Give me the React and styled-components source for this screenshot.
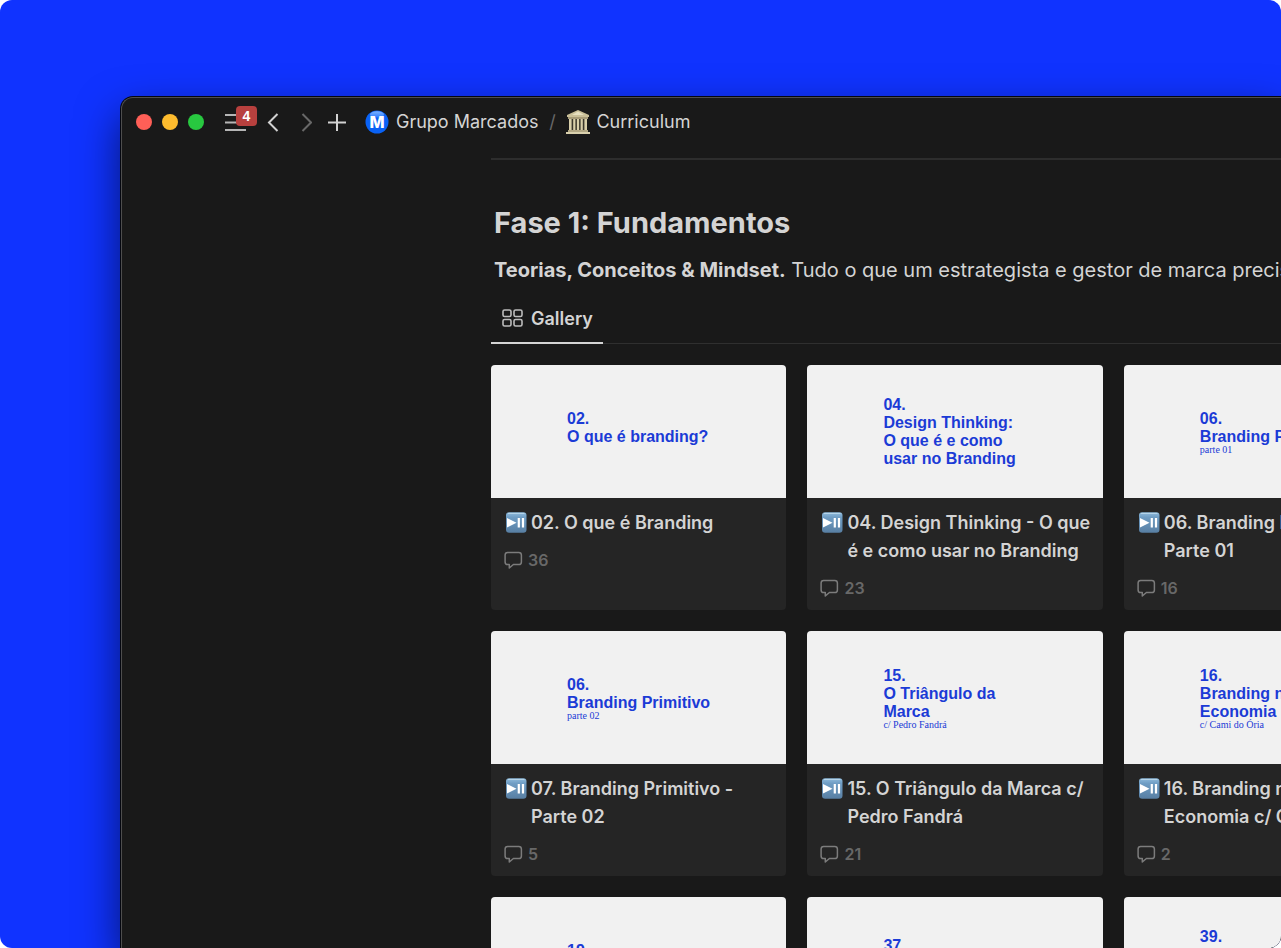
import React from 'react';
import styled, { createGlobalStyle } from 'styled-components';

const GlobalStyle = createGlobalStyle`
  *, *::before, *::after { box-sizing: border-box; }
  body {
    margin: 0;
    background: #fff;
    font-family: Inter, 'Liberation Sans', sans-serif;
    color: #d4d4d4;
  }
  h1, h2, h3, p { margin: 0; }
`;

const Backdrop = styled.div`
  display: flex;
  height: 100vh;
  padding: 97px 0 0 121px;
  border-radius: 12px;
  overflow: hidden;
  background: #1033ff;
`;

const Window = styled.main`
  flex: 1;
  min-width: 0;
  border: solid #4e4e4e;
  border-width: 1px 0 0 1px;
  border-top-left-radius: 12px;
  background: #191919;
  box-shadow: 0 0 0 1px #05070f, 0 18px 44px rgba(0, 0, 0, 0.6);
`;

const TitleBar = styled.header`
  display: flex;
  align-items: center;
  height: 48px;
  padding-left: 14px;
`;

const Lights = styled.div`
  display: flex;
  gap: 10px;
  margin-right: 21px;
`;

const Light = styled.span`
  width: 16px;
  height: 16px;
  border-radius: 50%;
  background: ${(p) => p.$color};
`;

const ToolButton = styled.button`
  position: relative;
  display: flex;
  padding: 0;
  border: 0;
  background: none;
  color: ${(p) => (p.$dim ? '#686868' : '#d2d2d2')};
`;

const Tools = styled.nav`
  display: flex;
  align-items: center;
  gap: 16px;
  margin-right: 19px;
`;

const Badge = styled.span`
  position: absolute;
  top: -5px;
  left: 11px;
  width: 21px;
  height: 20px;
  border-radius: 4px;
  background: #b8403e;
  color: #fff;
  font-size: 14px;
  font-weight: 700;
  line-height: 20px;
  text-align: center;
`;

const Crumbs = styled.nav`
  display: flex;
  align-items: center;
  font-size: 18px;
  line-height: 24px;
`;

const Crumb = styled.a`
  display: flex;
  align-items: center;
  gap: ${(p) => p.$gap};
  color: inherit;
  text-decoration: none;
`;

const Slash = styled.span`
  width: 28px;
  color: #686868;
  text-align: center;
`;

const Content = styled.section`
  margin-left: 369px;
  padding-top: 12px;
`;

const Rule = styled.hr`
  height: 2px;
  margin: 0 0 43px;
  border: 0;
  background: #2d2d2d;
`;

const Heading = styled.h1`
  padding-left: 3px;
  font-size: 29px;
  font-weight: 700;
  line-height: 40px;
`;

const Lead = styled.p`
  padding-left: 3px;
  margin-top: 12px;
  font-size: 20px;
  line-height: 30px;
  white-space: nowrap;
  overflow: hidden;

  strong { font-weight: 700; }
`;

const Tabs = styled.div`
  display: flex;
  margin-top: 10px;
  box-shadow: inset 0 -1px #2f2f2f;
`;

const Tab = styled.button`
  display: flex;
  align-items: flex-start;
  gap: 8px;
  height: 49px;
  padding: 12px 10px 0 11px;
  border: 0;
  border-bottom: 2px solid #d4d4d4;
  background: none;
  color: inherit;
  font: 600 18px/24px Inter, sans-serif;

  svg { margin-top: 2px; }
`;

const Gallery = styled.div`
  display: grid;
  grid-template-columns: repeat(3, minmax(0, 1fr));
  gap: 21px;
  width: 117.5%;
  margin-top: 21px;
`;

const Card = styled.article`
  display: flex;
  flex-direction: column;
  min-height: 245px;
  border-radius: 4px;
  overflow: hidden;
  background: #252525;
`;

const Cover = styled.div`
  display: flex;
  flex-direction: column;
  justify-content: center;
  height: 133px;
  padding-left: 76px;
  background: #f1f1f1;
  color: #1b3bd6;
`;

const CoverTitle = styled.h2`
  min-height: ${(p) => p.$rows * 18}px;
  font: 700 16px/18px 'Liberation Sans', Arial, sans-serif;
  white-space: pre;
`;

const CoverNote = styled.p`
  height: 8px;
  font: 10px/8px 'Liberation Serif', serif;
  white-space: nowrap;
`;

const Body = styled.div`
  padding: 11px 10px 0 14px;
`;

const CardTitle = styled.h3`
  display: flex;
  gap: 4px;
  font-size: 18px;
  font-weight: 600;
  line-height: 28px;
  white-space: pre;

  svg { flex: none; margin-top: 3px; }
`;

const Comments = styled.p`
  display: flex;
  align-items: center;
  gap: 5px;
  margin: 12px 0 0 -1px;
  color: #686868;
  font-size: 16px;
  font-weight: 600;
  line-height: 22px;
`;

const MenuIcon = () => (
  <svg width="23" height="22" viewBox="0 0 23 22" fill="none" stroke="#b5b5b5" strokeWidth="2" aria-hidden="true">
    <path d="M0 4h21M0 11.5h21M0 19h21" />
  </svg>
);

const BackIcon = () => (
  <svg width="18" height="22" viewBox="0 0 18 22" fill="none" stroke="currentColor" strokeWidth="2" aria-hidden="true">
    <path d="M13.5 3l-8.5 8.5 8.5 8.5" />
  </svg>
);

const ForwardIcon = () => (
  <svg width="14" height="22" viewBox="0 0 14 22" fill="none" stroke="currentColor" strokeWidth="2" aria-hidden="true">
    <path d="M4.5 3l8.5 8.5-8.5 8.5" />
  </svg>
);

const PlusIcon = () => (
  <svg width="18" height="22" viewBox="0 0 18 22" fill="none" stroke="currentColor" strokeWidth="2" aria-hidden="true">
    <path d="M0 11.5h18M9 3v17" />
  </svg>
);

const BrandIcon = () => (
  <svg width="24" height="24" viewBox="0 0 24 24" aria-hidden="true">
    <defs>
      <linearGradient id="gloss" x1="0" y1="0" x2="0" y2="1">
        <stop offset="0" stopColor="#7db4ff" />
        <stop offset="1" stopColor="#2d7dff" />
      </linearGradient>
    </defs>
    <circle cx="12" cy="12" r="11.5" fill="#0a62f5" />
    <ellipse cx="12" cy="4.4" rx="7" ry="3.2" fill="url(#gloss)" />
    <text x="12" y="18" textAnchor="middle" fontFamily="Inter, sans-serif" fontSize="16" fontWeight="800" fill="#fff">M</text>
  </svg>
);

const TempleIcon = () => (
  <svg width="24" height="24" viewBox="0 0 24 24" aria-hidden="true">
    <path d="M12 0L23 5v2H1V5z" fill="#c9bf98" />
    <path d="M12 1.5L18 5H6z" fill="#e6dfc0" />
    <path d="M2 7h20v2H2z" fill="#a69b78" />
    <path d="M3 9h18v11H3z" fill="#39362b" />
    <path d="M3 9h2.6v11H3zM7.2 9h2.2v11H7.2zM10.9 9h2.2v11h-2.2zM14.6 9h2.2v11h-2.2zM18.4 9H21v11h-2.6z" fill="#d8cfaa" />
    <path d="M2 20h20v2H2z" fill="#b2a783" />
    <path d="M0 22h24v2H0z" fill="#d9d0ad" />
  </svg>
);

const GalleryIcon = () => (
  <svg width="21" height="18" viewBox="0 0 21 18" fill="none" stroke="#bcbcbc" strokeWidth="1.6" aria-hidden="true">
    <rect x="1" y="1" width="8" height="6.5" rx="1.6" />
    <rect x="12" y="1" width="8" height="6.5" rx="1.6" />
    <rect x="1" y="10.5" width="8" height="6.5" rx="1.6" />
    <rect x="12" y="10.5" width="8" height="6.5" rx="1.6" />
  </svg>
);

const PlayPauseIcon = () => (
  <svg width="22" height="21" viewBox="0 0 22 21" aria-hidden="true">
    <defs>
      <linearGradient id="key" x1="0" y1="0" x2="0" y2="1">
        <stop offset="0" stopColor="#8fbbdc" />
        <stop offset="0.25" stopColor="#6f9dc4" />
        <stop offset="1" stopColor="#587fa3" />
      </linearGradient>
    </defs>
    <rect x="1" y="0.3" width="20.5" height="20.4" rx="3.2" fill="url(#key)" />
    <path d="M3 1.5h16.5" stroke="#b4d4ea" strokeWidth="1" />
    <path d="M2 6l9.5 4.7L2 15.4z" fill="#fff" />
    <path d="M12.7 6h2.2v9.4h-2.2zM16.9 6h2.2v9.4h-2.2z" fill="#fff" />
  </svg>
);

const CommentIcon = () => (
  <svg width="19" height="18" viewBox="0 0 19 18" fill="none" stroke="#7c7c7c" strokeWidth="1.5" strokeLinejoin="round" aria-hidden="true">
    <path d="M3.7 1.5h11.1a2.6 2.6 0 0 1 2.6 2.6v6.8a2.6 2.6 0 0 1-2.6 2.6H9.4L5.3 17v-3.5H3.7a2.6 2.6 0 0 1-2.6-2.6V4.1a2.6 2.6 0 0 1 2.6-2.6z" />
  </svg>
);

const lessons = [
  { cover: '02.\nO que é branding?', rows: 2, note: '', title: '02. O que é Branding', comments: 36 },
  { cover: '04.\nDesign Thinking:\nO que é e como\nusar no Branding', rows: 4, title: '04. Design Thinking - O que\né e como usar no Branding', comments: 23 },
  { cover: '06.\nBranding Primitivo', rows: 2, note: 'parte 01', title: '06. Branding Primitivo -\nParte 01', comments: 16 },
  { cover: '06.\nBranding Primitivo', rows: 2, note: 'parte 02', title: '07. Branding Primitivo -\nParte 02', comments: 5 },
  { cover: '15.\nO Triângulo da\nMarca', rows: 3, note: 'c/ Pedro Fandrá', title: '15. O Triângulo da Marca c/\nPedro Fandrá', comments: 21 },
  { cover: '16.\nBranding na\nEconomia', rows: 3, note: 'c/ Cami do Ória', title: '16. Branding na\nEconomia c/ Cami do Ória', comments: 2 },
  { cover: '19.', rows: 2, note: '' },
  { cover: '37.', rows: 3 },
  { cover: '39.', rows: 4 },
];

const LessonCard = ({ lesson }) => (
  <Card>
    <Cover>
      <CoverTitle $rows={lesson.rows}>{lesson.cover}</CoverTitle>
      {lesson.note !== undefined && <CoverNote>{lesson.note}</CoverNote>}
    </Cover>
    {lesson.title && (
      <Body>
        <CardTitle>
          <PlayPauseIcon />
          <span>{lesson.title}</span>
        </CardTitle>
        <Comments>
          <CommentIcon />
          {lesson.comments}
        </Comments>
      </Body>
    )}
  </Card>
);

export default function App() {
  return (
    <>
      <GlobalStyle />
      <Backdrop>
        <Window>
          <TitleBar>
            <Lights>
              <Light $color="#ff5f57" />
              <Light $color="#febc2e" />
              <Light $color="#28c840" />
            </Lights>
            <Tools>
              <ToolButton aria-label="Menu">
                <MenuIcon />
                <Badge>4</Badge>
              </ToolButton>
              <ToolButton aria-label="Back"><BackIcon /></ToolButton>
              <ToolButton aria-label="Forward" $dim><ForwardIcon /></ToolButton>
              <ToolButton aria-label="New"><PlusIcon /></ToolButton>
            </Tools>
            <Crumbs>
              <Crumb href="#grupo" $gap="7px"><BrandIcon />Grupo Marcados</Crumb>
              <Slash>/</Slash>
              <Crumb href="#curriculum" $gap="6px"><TempleIcon />Curriculum</Crumb>
            </Crumbs>
          </TitleBar>
          <Content>
            <Rule />
            <Heading>Fase 1: Fundamentos</Heading>
            <Lead>
              <strong>Teorias, Conceitos &amp; Mindset.</strong> Tudo o que um estrategista e gestor de marca precisa
            </Lead>
            <Tabs>
              <Tab><GalleryIcon />Gallery</Tab>
            </Tabs>
            <Gallery>
              {lessons.map((lesson, i) => <LessonCard key={i} lesson={lesson} />)}
            </Gallery>
          </Content>
        </Window>
      </Backdrop>
    </>
  );
}
